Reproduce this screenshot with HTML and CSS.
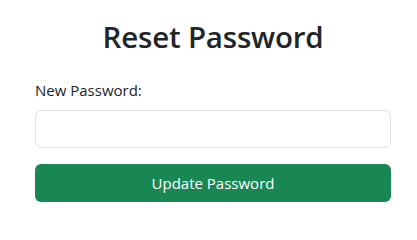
FILE: index.html
```html
<!DOCTYPE html>
<html lang="en">
<head>
<meta charset="utf-8">
<title>Reset Password</title>
<link rel="stylesheet" href="styles.css">
</head>
<body>
<main class="container">
  <h1 class="title">Reset Password</h1>
  <form class="form">
    <label class="label" for="pw">New Password:</label>
    <input class="input" id="pw" type="password">
    <button class="btn" type="button">Update Password</button>
  </form>
</main>
</body>
</html>
```
FILE: styles.css
```css
* { box-sizing: border-box; }
html, body { margin: 0; background: #fff; }
body {
  font-family: "Open Sans", "Noto Sans", sans-serif;
  color: #212529;
}
.container {
  width: 356px;
  margin-left: 35px;
  padding-top: 18px;
}
.title {
  margin: 0;
  text-align: center;
  font-size: 29.5px;
  font-weight: 600;
  letter-spacing: -0.2px;
  line-height: 38px;
}
.form {
  display: flex;
  flex-direction: column;
  margin-top: 22px;
}
.label {
  font-size: 15px;
  line-height: 24px;
  margin-bottom: 8px;
}
.input {
  height: 38px;
  border: 1px solid #dee2e6;
  border-radius: 6px;
  background: #fff;
  font: inherit;
  padding: 6px 12px;
}
.btn {
  margin-top: 16px;
  height: 38px;
  border: 0;
  border-radius: 6px;
  background: #198754;
  color: #fff;
  font-family: inherit;
  font-size: 15px;
}
```
